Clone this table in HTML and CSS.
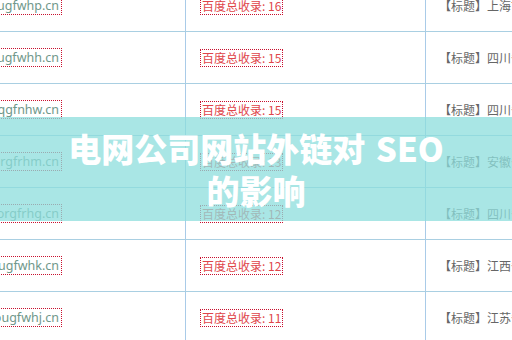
FILE: index.html
```html
<!DOCTYPE html>
<html lang="zh-CN">
<head>
<meta charset="utf-8">
<title>电网公司网站外链对 SEO 的影响</title>
<link rel="stylesheet" href="styles.css">
</head>
<body>
<div class="page">
  <div class="table">
    <div class="row">
      <div class="cell c1"><div class="clip"><span class="dom">oougfwhp.cn</span></div></div>
      <div class="cell c2"><span class="cnt">百度总收录: 16</span></div>
      <div class="cell c3"><span class="ttl">【标题】上海市电力公司</span></div>
    </div>
    <div class="row">
      <div class="cell c1"><div class="clip"><span class="dom">oougfwhh.cn</span></div></div>
      <div class="cell c2"><span class="cnt">百度总收录: 15</span></div>
      <div class="cell c3"><span class="ttl">【标题】四川省电力公司</span></div>
    </div>
    <div class="row">
      <div class="cell c1"><div class="clip"><span class="dom">ooqgfnhw.cn</span></div></div>
      <div class="cell c2"><span class="cnt">百度总收录: 15</span></div>
      <div class="cell c3"><span class="ttl">【标题】四川省电力公司</span></div>
    </div>
    <div class="row">
      <div class="cell c1"><div class="clip"><span class="dom">oorgfrhm.cn</span></div></div>
      <div class="cell c2"><span class="cnt">百度总收录: 13</span></div>
      <div class="cell c3"><span class="ttl">【标题】安徽省电力公司</span></div>
    </div>
    <div class="row">
      <div class="cell c1"><div class="clip"><span class="dom">oorgfrhg.cn</span></div></div>
      <div class="cell c2"><span class="cnt">百度总收录: 12</span></div>
      <div class="cell c3"><span class="ttl">【标题】四川省电力公司</span></div>
    </div>
    <div class="row">
      <div class="cell c1"><div class="clip"><span class="dom">oougfwhk.cn</span></div></div>
      <div class="cell c2"><span class="cnt">百度总收录: 12</span></div>
      <div class="cell c3"><span class="ttl">【标题】江西省电力公司</span></div>
    </div>
    <div class="row">
      <div class="cell c1"><div class="clip"><span class="dom">oougfwhj.cn</span></div></div>
      <div class="cell c2"><span class="cnt">百度总收录: 11</span></div>
      <div class="cell c3"><span class="ttl">【标题】江苏省电力公司</span></div>
    </div>
  </div>
  <div class="banner">
    <h1 class="title">电网公司网站外链对 SEO<br>的影响</h1>
  </div>
</div>
</body>
</html>
```

FILE: styles.css
```css
html, body {
  margin: 0;
  padding: 0;
  background: #ffffff;
}

.page {
  position: relative;
  width: 512px;
  height: 340px;
  overflow: hidden;
  font-family: "Noto Sans", "Noto Sans CJK SC", sans-serif;
  font-size: 12px;
}

.table {
  margin-top: -20px;
  display: flex;
  flex-direction: column;
}

.row {
  display: grid;
  grid-template-columns: 186px 240px 1fr;
  height: 51px;
  border-bottom: 1px solid #a9cfe2;
}

.cell {
  display: flex;
  align-items: center;
  overflow: hidden;
  white-space: nowrap;
}

.c1 {
  border-right: 1px solid #a9cbe8;
}

.c2 {
  border-right: 1px solid #a9cbe8;
  padding-left: 14px;
}

.c3 {
  padding-left: 13px;
}

.clip {
  width: 62px;
  display: flex;
  justify-content: flex-end;
  overflow: hidden;
}

.dom {
  flex: none;
  border: 1px dotted #c8102e;
  padding: 0 2px 0 1px;
  line-height: 17px;
  font-size: 12.5px;
  color: #6f978a;
}

.cnt {
  border: 1px dotted #c8102e;
  padding: 0 1px;
  line-height: 16px;
  color: #e0454a;
  font-family: "Noto Sans CJK SC", sans-serif;
}

.ttl {
  color: #666666;
  font-family: "Noto Sans CJK SC", sans-serif;
}

.banner {
  position: absolute;
  left: 0;
  right: 0;
  top: 117px;
  height: 104px;
  background: rgba(140, 222, 220, 0.75);
  display: flex;
  justify-content: center;
  padding-top: 10px;
  box-sizing: border-box;
}

.title {
  margin: 0;
  color: #ffffff;
  font-family: "Noto Sans CJK SC", sans-serif;
  font-weight: 900;
  font-size: 33px;
  line-height: 42px;
  text-align: center;
  word-spacing: 3px;
}
```
